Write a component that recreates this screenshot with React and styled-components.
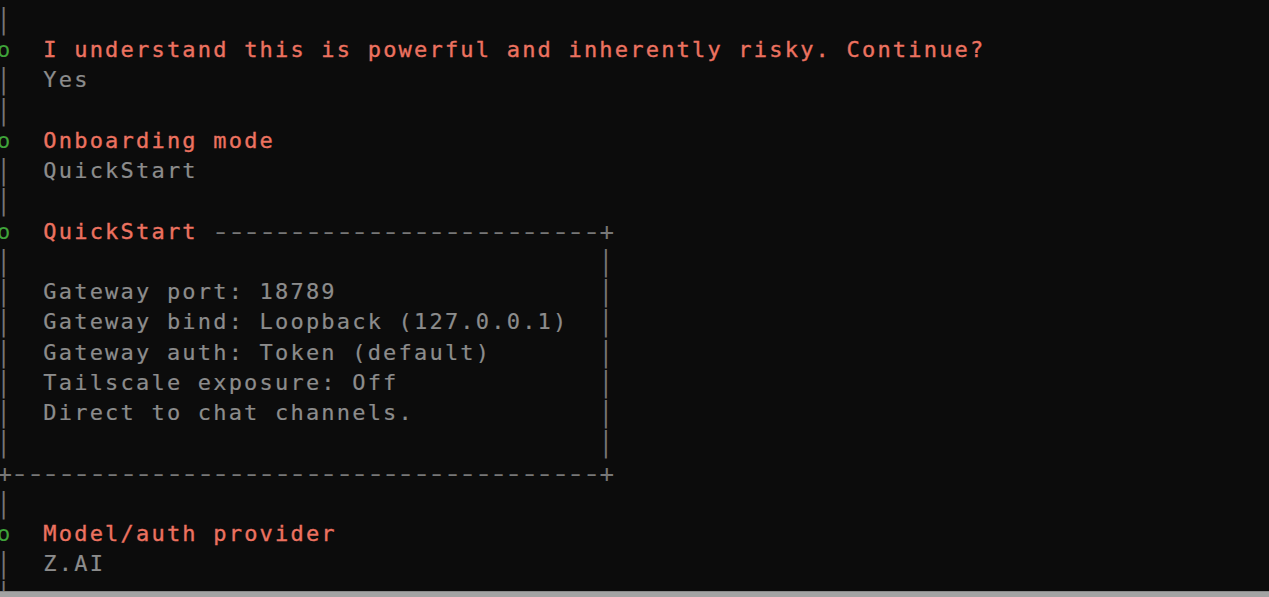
import styled, { createGlobalStyle } from "styled-components";

const GlobalStyle = createGlobalStyle`
    html, body {
        margin: 0;
        padding: 0;
        background: #0c0c0c;
        overflow: hidden;
    }
`;

const lines = [
    { kind: "bar" },
    { kind: "step", title: "I understand this is powerful and inherently risky. Continue?" },
    { kind: "value", text: "Yes" },
    { kind: "bar" },
    { kind: "step", title: "Onboarding mode" },
    { kind: "value", text: "QuickStart" },
    { kind: "bar" },
    { kind: "noteTop", title: "QuickStart" },
    { kind: "note", text: "" },
    { kind: "note", text: "Gateway port: 18789" },
    { kind: "note", text: "Gateway bind: Loopback (127.0.0.1)" },
    { kind: "note", text: "Gateway auth: Token (default)" },
    { kind: "note", text: "Tailscale exposure: Off" },
    { kind: "note", text: "Direct to chat channels." },
    { kind: "note", text: "" },
    { kind: "noteBottom" },
    { kind: "bar" },
    { kind: "step", title: "Model/auth provider" },
    { kind: "value", text: "Z.AI" },
    { kind: "bar" },
];

const BOX_WIDTH = 40; // columns, corner to corner
const NOTE_INNER = 34;

const Dashes = ({ count }) => (
    <>
        {Array.from({ length: count }, (_, i) => (
            <Dash key={i}>-</Dash>
        ))}
    </>
);

const App = () => {
    return (
        <>
            <GlobalStyle />
            <Window>
                <Screen>
                    {lines.map((line, i) => (
                        <Line key={i}>{renderLine(line)}</Line>
                    ))}
                </Screen>
                <Taskbar />
            </Window>
        </>
    );
};

function renderLine(line) {
    switch (line.kind) {
        case "bar":
            return <Pipe>|</Pipe>;
        case "step":
            return (
                <>
                    <Bullet>o</Bullet>
                    {"  "}
                    <Title>{line.title}</Title>
                </>
            );
        case "value":
            return (
                <>
                    <Pipe>|</Pipe>
                    {"  "}
                    <Value>{line.text}</Value>
                </>
            );
        case "noteTop": {
            const used = 3 + line.title.length + 1;
            return (
                <>
                    <Bullet>o</Bullet>
                    {"  "}
                    <Title>{line.title}</Title>
                    {" "}
                    <Dashes count={BOX_WIDTH - used - 1} />
                    <Corner>+</Corner>
                </>
            );
        }
        case "note":
            return (
                <>
                    <Pipe>|</Pipe>
                    {"  "}
                    <Value>{line.text.padEnd(NOTE_INNER, " ")}</Value>
                    {"  "}
                    <Pipe>|</Pipe>
                </>
            );
        case "noteBottom":
            return (
                <>
                    <Corner>+</Corner>
                    <Dashes count={BOX_WIDTH - 2} />
                    <Corner>+</Corner>
                </>
            );
        default:
            return null;
    }
}

const CELL = 15.45;

const Window = styled.div`
    width: 1269px;
    height: 597px;
    display: flex;
    flex-direction: column;
    background: #0c0c0c;
`;

const Screen = styled.div`
    flex: 1;
    padding: 5px 0 0 0;
    margin-left: -3px;
    font-family: "DejaVu Sans Mono", "Liberation Mono", monospace;
    font-size: 22px;
    letter-spacing: 2.2px;
    overflow: hidden;
`;

const Line = styled.div`
    height: 30.24px;
    line-height: 30.24px;
    white-space: pre;
    color: #8c8c8c;
`;

const Cell = styled.span`
    display: inline-block;
    width: ${CELL}px;
    text-align: center;
    letter-spacing: 0;
    color: #777777;
`;

const Pipe = styled(Cell)`
    width: ${CELL - 3}px;
    margin-right: 3px;
    transform: scaleY(1.25);
`;

const Dash = styled(Cell)`
    transform: scaleX(1.45);
`;

const Corner = styled(Cell)`
    transform: scale(1.1);
`;

const Bullet = styled.span`
    color: #3fa33a;
`;

const Title = styled.span`
    color: #ec7260;
    -webkit-text-stroke: 0.35px #ec7260;
`;

const Value = styled.span`
    color: #8c8c8c;
    -webkit-text-stroke: 0.2px #8c8c8c;
`;

const Taskbar = styled.div`
    height: 5px;
    flex-shrink: 0;
    border-top: 1px solid #8a8a8a;
    background: #a3a3a3;
`;

export default App;
